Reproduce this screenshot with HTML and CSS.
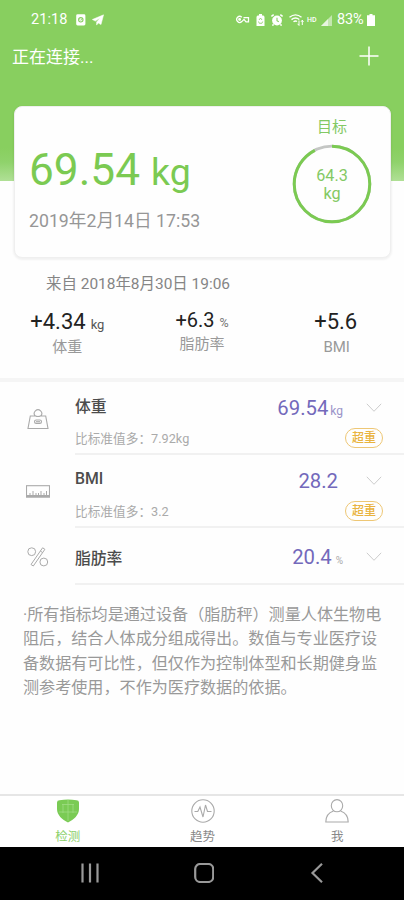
FILE: index.html
```html
<!DOCTYPE html>
<html lang="zh-CN">
<head>
<meta charset="utf-8">
<meta name="viewport" content="width=device-width, initial-scale=1">
<title>检测</title>
<link rel="stylesheet" href="styles.css">
</head>
<body>
<div class="app">
  <header class="hero">
    <div class="status">
      <span class="clock">21:18</span>
      <svg class="s-note" width="10" height="12" viewBox="0 0 10 12"><rect x=".2" y=".3" width="9.2" height="11.2" rx="1.4" fill="#fff"/><circle cx="4.8" cy="5.8" r="2.2" fill="none" stroke="#88cf5f" stroke-width="1.1"/><path d="M3.8 5.4l1 1 1.4-1.6" fill="none" stroke="#88cf5f" stroke-width=".8"/></svg>
      <svg class="s-plane" width="12" height="12" viewBox="0 0 12 12"><path d="M11.600.8L.3 5.500l3 1.600 4.800-3.200-3.500 4v3.200l1.700-2.100 2.700 1.600z" fill="#fff" stroke="#fff" stroke-width=".5"/></svg>
      <span class="grow"></span>
      <svg width="14" height="9" viewBox="0 0 14 9" fill="none" stroke="#fff" stroke-width="1.3"><path d="M5.800 2.200A3 3 0 1 0 5.800 6.600L8 4.400 10 6.800h2.500V2.600H7.500"/><circle cx="3.600" cy="4.400" r=".8"/></svg>
      <svg class="s-bat" width="9" height="12" viewBox="0 0 9 12"><path d="M3 0h3v1.500h1.500l1 1.200V12H.5V2.700l1-1.200H3z" fill="#fff"/><path d="M3 6l1.500-2L6 6M2.500 7.500l.8 1.800h2.600l.8-1.800" stroke="#88cf5f" stroke-width=".8" fill="none"/></svg>
      <svg class="s-alarm" width="12" height="12" viewBox="0 0 12 12"><circle cx="6" cy="6.500" r="4.900" fill="#fff"/><path d="M.4 2.500L2.700.6M11.600 2.500L9.300.6M2.500 10.300l-1 1.400M9.500 10.300l1 1.400" stroke="#fff" stroke-width="1.500"/><path d="M6 3.700v3l1.800 1" fill="none" stroke="#88cf5f" stroke-width="1.100"/></svg>
      <svg class="s-wifi" width="15" height="12" viewBox="0 0 15 12" fill="none" stroke="#fff" stroke-width="1.400"><path d="M.5 3.300Q6.500-1.500 12.500 3.300M2.500 5.600Q6.500 2.500 10.300 5.500M4.500 7.800Q6.500 6.300 8 7.500"/><path d="M10 6.500v5M8.600 9.800l1.400 1.600M13.300 11V6.200M12 7.800l1.300-1.600 1.200 1.600" stroke-width="1"/></svg>
      <span class="hd">HD</span>
      <svg class="s-sig" width="11" height="11" viewBox="0 0 11 11"><path d="M0 11L11 0v11z" fill="#fff" opacity=".5"/><path d="M0 11l7-7v7z" fill="#fff" opacity=".6"/></svg>
      <span class="pct">83%</span>
      <svg width="8" height="12" viewBox="0 0 8 12"><path d="M2.500 0h3v1.200H8V12H0V1.200h2.500z" fill="#fff"/></svg>
    </div>
    <div class="title">
      <span>正在连接...</span>
      <svg width="20" height="20" viewBox="0 0 20 20"><path d="M10 .5v19M.5 10h19" stroke="#fff" stroke-width="1.500"/></svg>
    </div>
  </header>

  <section class="card">
    <div class="reading">
      <div class="weight"><span>69.54</span><small>kg</small></div>
      <div class="date">2019年2月14日 17:53</div>
    </div>
    <div class="goal">
      <div class="goal-label">目标</div>
      <div class="ring">
        <svg width="80" height="80" viewBox="0 0 80 80"><circle cx="40" cy="40" r="37.800" fill="none" stroke="#c4c6c4" stroke-width="2.800"/><circle cx="40" cy="40" r="37.800" fill="none" stroke="#7bca52" stroke-width="3" pathLength="100" stroke-dasharray="92.500 7.500" transform="rotate(-90 40 40)"/></svg>
        <div class="ring-text">64.3<br>kg</div>
      </div>
    </div>
  </section>

  <div class="from">来自 2018年8月30日 19:06</div>
  <section class="stats">
    <div class="stat"><div class="delta"><span>+4.34</span><small>kg</small></div><div class="name">体重</div></div>
    <div class="stat mid"><div class="delta"><span>+6.3</span><small>%</small></div><div class="name">脂肪率</div></div>
    <div class="stat last"><div class="delta"><span>+5.6</span></div><div class="name">BMI</div></div>
  </section>

  <section class="list">
    <div class="row">
      <div class="icon"><svg width="22" height="22" viewBox="0 0 22 22" fill="none" stroke="#aaa" stroke-width="1.100"><path d="M8.300 8A3.700 3.700 0 1 1 13.700 8M3.300 8h5.200q2.500 1 5 0h5.200l2.300 12.500H1z"/><rect x="7.500" y="12" width="7" height="3.400" rx="1.700"/><path d="M9 13.700h4"/></svg></div>
      <div class="body">
        <div class="line"><span class="label">体重</span><span class="value">69.54<small>kg</small></span><svg class="chev" width="16" height="10" viewBox="0 0 16 10"><path d="M.8.8L8 8.300 15.200.8"/></svg></div>
        <div class="line sub"><span>比标准值多：7.92kg</span><span class="badge">超重</span></div>
      </div>
    </div>
    <div class="row">
      <div class="icon"><svg width="24" height="13" viewBox="0 0 24 13" fill="none" stroke="#aaa"><rect x=".5" y=".7" width="23" height="11.500" stroke-width="1.100"/><path d="M1 11h22" stroke-width="2"/><path d="M4 10V8M7 10V6M10 10V8M12.500 10V8M15 10V6M18 10V8M20.500 10V6"/></svg></div>
      <div class="body">
        <div class="line"><span class="label">BMI</span><span class="value nounit">28.2</span><svg class="chev" width="16" height="10" viewBox="0 0 16 10"><path d="M.8.8L8 8.300 15.200.8"/></svg></div>
        <div class="line sub"><span>比标准值多：3.2</span><span class="badge">超重</span></div>
      </div>
    </div>
    <div class="row short">
      <div class="icon"><svg width="22" height="20" viewBox="0 0 22 20" fill="none" stroke="#aaa" stroke-width="1"><circle cx="4.700" cy="4.700" r="3.900"/><circle cx="16.800" cy="15" r="3.900"/><path d="M15.600.8l2.300 1.500L6.300 19 4 17.500zM13.300 4l2.200 1.500"/></svg></div>
      <div class="body">
        <div class="line"><span class="label">脂肪率</span><span class="value">20.4<small class="pc">%</small></span><svg class="chev" width="16" height="10" viewBox="0 0 16 10"><path d="M.8.8L8 8.300 15.200.8"/></svg></div>
      </div>
    </div>
  </section>

  <p class="notice">·所有指标均是通过设备（脂肪秤）测量人体生物电<br>阻后，结合人体成分组成得出。数值与专业医疗设<br>备数据有可比性，但仅作为控制体型和长期健身监<br>测参考使用，不作为医疗数据的依据。</p>

  <nav class="tabs">
    <div class="tab active"><svg width="24" height="24" viewBox="0 0 24 24"><path d="M1 3.500Q1 1.200 3.500 1.200Q12-.4 20.500 1.200Q23 1.200 23 3.500V10C23 16 18 20.500 12 23.500C6 20.500 1 16 1 10z" fill="#7acb54"/><path d="M12 1v21M3 13h18M6 5.500h12M7 5v9M17 5v9" stroke="#a0dc84" stroke-width=".8" fill="none"/></svg><span>检测</span></div>
    <div class="tab"><svg width="24" height="24" viewBox="0 0 24 24" fill="none" stroke="#aaa" stroke-width="1.100"><circle cx="12" cy="12" r="11.200"/><path d="M3.500 12.500h3.300L9 8l3 10 2.500-12 2 6.500h4"/></svg><span>趋势</span></div>
    <div class="tab"><svg width="24" height="24" viewBox="0 0 24 24" fill="none" stroke="#aaa" stroke-width="1.100"><ellipse cx="12" cy="6.700" rx="5.700" ry="6.100"/><path d="M8.500 12C4 13.500.8 17 .8 23h22.400C23.200 17 20 13.500 15.500 12"/></svg><span>我</span></div>
  </nav>
  <div class="sysbar">
    <svg width="20" height="20" viewBox="0 0 20 20"><path d="M2.500.5v19M10 .5v19M17.500.5v19"/></svg>
    <svg width="20" height="20" viewBox="0 0 20 20"><rect x="1.200" y="1" width="18" height="18" rx="5"/></svg>
    <svg width="20" height="20" viewBox="0 0 20 20"><path d="M14 .8L4.500 10l9.500 9.200"/></svg>
  </div>
</div>
</body>
</html>
```
FILE: styles.css
```css
* { box-sizing: border-box; }
body { margin: 0; background: #fefefe; font-family: Roboto, "Noto Sans CJK SC", sans-serif; color: #888; }
svg { display: block; flex: none; }
.app { width: 404px; height: 900px; overflow: hidden; display: flex; flex-direction: column; white-space: nowrap; }
.app > * { flex: none; }

.hero { height: 181px; background: linear-gradient(#88cf5f 0 148px, #8fd26b 162px, #b0e096 181px); color: #fff; }
.status { height: 39px; padding: 0 29px 0 31px; display: flex; align-items: center; font-size: 14.500px; line-height: 40px; }
.clock { width: 45px; letter-spacing: .1px; }
.s-plane { margin-left: 6px; }
.grow { flex: 1; }
.s-bat { margin-left: 6px; }
.s-alarm { margin-left: 6px; }
.s-wifi { margin-left: 6px; }
.hd { font-size: 7px; font-weight: 500; margin-left: 3px; width: 11px; }
.s-sig { margin: 1px 5px 0 3px; }
.pct { font-size: 14.500px; width: 30px; letter-spacing: -.2px; }
.title { height: 32px; padding: 0 25px 0 12px; display: flex; justify-content: space-between; align-items: center; font-size: 17px; }
.title svg { margin-top: 2px; }

.card { width: 377px; height: 152px; margin: -75px 0 0 14px; background: #fefefe; border: 1px solid #efefef; border-radius: 8px; box-shadow: 0 1px 2px 1px rgba(0,0,0,.05); display: flex; justify-content: space-between; }
.reading { padding: 37px 0 0 14px; }
.weight { display: flex; align-items: baseline; font-size: 44.200px; line-height: 52px; color: #7bca52; }
.weight small { font-size: 37.500px; margin-left: 11px; }
.date { margin-top: 9px; font-size: 17.700px; line-height: 28px; color: #969696; }
.goal { width: 80px; margin-right: 18px; padding-top: 8px; text-align: center; color: #83c964; }
.goal-label { font-size: 15px; line-height: 24px; }
.ring { height: 80px; margin-top: 5px; display: grid; }
.ring > * { grid-area: 1 / 1; }
.ring-text { align-self: center; font-size: 16.200px; line-height: 18.500px; padding-top: 2px; }

.from { margin: 15px 0 0 46px; font-size: 15.450px; line-height: 22px; color: #858585; }
.stats { height: 87px; padding: 12px 0 0; display: flex; justify-content: space-between; border-bottom: 4px solid #f5f5f5; }
.stat { width: 136px; text-align: center; }
.delta { display: flex; justify-content: center; align-items: baseline; font-size: 22px; line-height: 30px; height: 29px; color: #222; }
.delta small { font-size: 13px; color: #555; margin-left: 5px; }
.name { font-size: 15px; line-height: 22px; color: #999; }
.mid .delta { font-size: 20px; line-height: 26px; height: 26px; }
.mid .delta small { font-size: 12.500px; color: #777; }
.last .delta { padding-right: 2px; }

.row { height: 73px; display: flex; align-items: center; }
.row.short { height: 57px; }
.icon { width: 75px; display: flex; justify-content: center; }
.body { flex: 1; height: 100%; border-bottom: 2px solid #f1f1f1; padding: 9px 21px 0 0; }
.line { display: flex; align-items: center; height: 34px; }
.short .body { padding-top: 12px; }
.label { flex: 1; font-size: 15.800px; font-weight: 500; color: #4c4c4c; padding-bottom: 5px; }
.short .label { padding: 0; }
.value { font-size: 20.300px; color: #7369bb; }
.value small { font-size: 12px; color: #9a93c8; margin-left: 2px; }
.value .pc { font-size: 10px; color: #aaa; margin-left: 4px; }
.chev { margin: 0 1px 0 23px; fill: none; stroke: #ccc; stroke-width: 1; }
.nounit + .chev { margin-left: 28px; }
.sub { height: 25px; justify-content: space-between; font-size: 12.700px; color: #aaa; }
.badge { width: 38px; height: 20px; border: 1.500px solid #eec775; border-radius: 10px; text-align: center; font-size: 12px; font-weight: 500; line-height: 18px; color: #e9b33e; }

.notice { margin: 18px 0 0 23px; font-size: 16.100px; line-height: 24.300px; color: #999; }

.tabs { margin-top: auto; height: 53px; border-top: 2px solid #e6e6e6; display: flex; background: #fff; }
.tab { flex: 1; display: flex; flex-direction: column; align-items: center; padding: 3px 0 0 1px; font-size: 12.500px; line-height: 18px; color: #888; }
.tab span { margin-top: 5px; }
.tab.active { color: #8bcf68; }
.sysbar { height: 53px; background: #000; display: flex; justify-content: center; align-items: center; gap: 94px; padding: 0 0 2px 3px; }
.sysbar svg { fill: none; stroke: #999; stroke-width: 2.200; }
```
